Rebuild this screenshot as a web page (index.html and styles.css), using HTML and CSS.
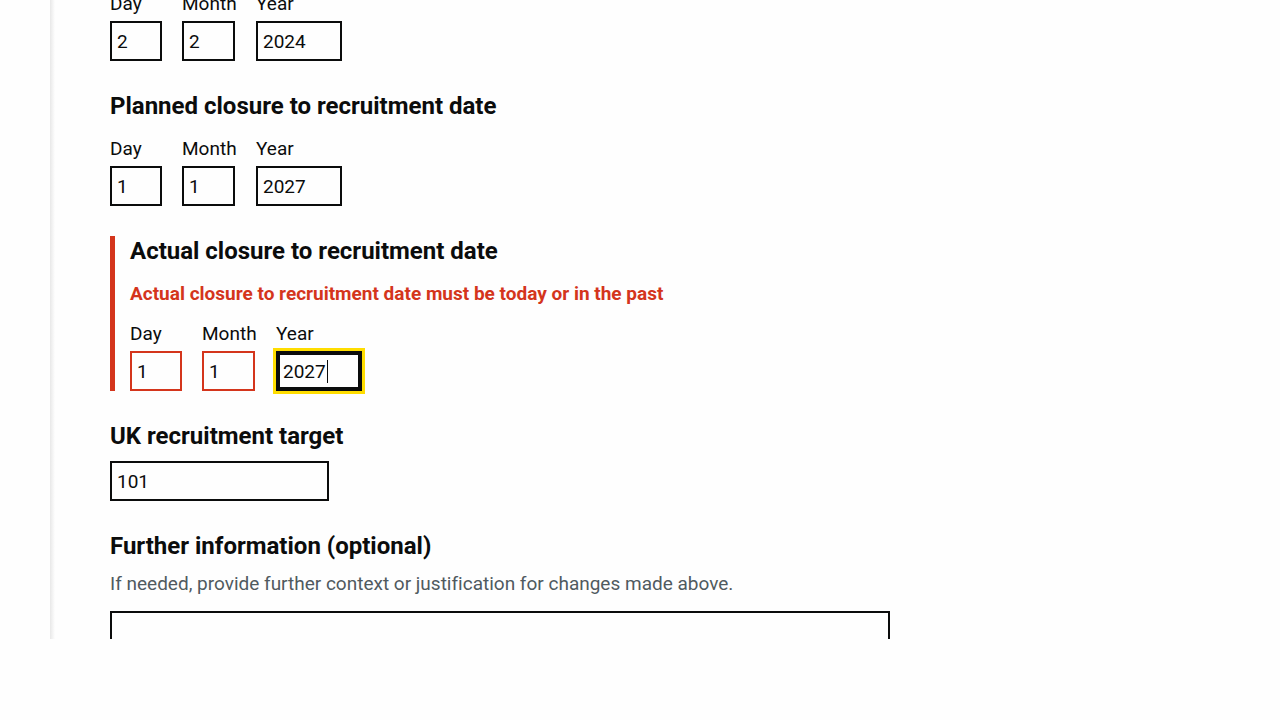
FILE: index.html
```html
<!DOCTYPE html>
<html lang="en">
<head>
<meta charset="utf-8">
<meta name="viewport" content="width=device-width, initial-scale=1">
<title>Recruitment dates</title>
<link rel="stylesheet" href="styles.css">
</head>
<body>
<main class="viewport">
  <form class="panel">
    <fieldset class="group" aria-label="Planned opening date">
      <div class="date">
        <div class="date-item"><label for="open-day">Day</label><input class="input day" id="open-day" type="text" inputmode="numeric" value="2"></div>
        <div class="date-item month-item"><label for="open-month">Month</label><input class="input month" id="open-month" type="text" inputmode="numeric" value="2"></div>
        <div class="date-item"><label for="open-year">Year</label><input class="input year" id="open-year" type="text" inputmode="numeric" value="2024"></div>
      </div>
    </fieldset>

    <fieldset class="group">
      <legend class="heading legend">Planned closure to recruitment date</legend>
      <div class="date">
        <div class="date-item"><label for="planned-day">Day</label><input class="input day" id="planned-day" type="text" inputmode="numeric" value="1"></div>
        <div class="date-item month-item"><label for="planned-month">Month</label><input class="input month" id="planned-month" type="text" inputmode="numeric" value="1"></div>
        <div class="date-item"><label for="planned-year">Year</label><input class="input year" id="planned-year" type="text" inputmode="numeric" value="2027"></div>
      </div>
    </fieldset>

    <div class="group group-error">
      <fieldset class="fieldset" aria-describedby="actual-error">
        <legend class="heading legend">Actual closure to recruitment date</legend>
        <p class="error" id="actual-error">Actual closure to recruitment date must be today or in the past</p>
        <div class="date">
          <div class="date-item"><label for="actual-day">Day</label><input class="input day invalid" id="actual-day" type="text" inputmode="numeric" value="1"></div>
          <div class="date-item month-item"><label for="actual-month">Month</label><input class="input month invalid" id="actual-month" type="text" inputmode="numeric" value="1"></div>
          <div class="date-item caret-item"><label for="actual-year">Year</label><input class="input year invalid" id="actual-year" type="text" inputmode="numeric" value="2027" autofocus></div>
        </div>
      </fieldset>
    </div>

    <div class="group">
      <label class="heading label" for="target">UK recruitment target</label>
      <input class="input target" id="target" type="text" inputmode="numeric" value="101">
    </div>

    <div class="group">
      <label class="heading label" for="info">Further information (optional)</label>
      <p class="hint" id="info-hint">If needed, provide further context or justification for changes made above.</p>
      <textarea class="input textarea" id="info" rows="5" aria-describedby="info-hint"></textarea>
    </div>
  </form>
</main>
</body>
</html>
```
FILE: styles.css
```css
* {
  box-sizing: border-box;
}

body {
  margin: 0;
  height: 100vh;
  padding-bottom: 81px;
  background: #fefefe;
  color: #0b0c0c;
  font-family: Roboto, "Liberation Sans", sans-serif;
  font-size: 19px;
  line-height: 25px;
  text-rendering: optimizeSpeed;
}

.viewport {
  height: 100%;
  overflow: hidden;
  padding-left: 50px;
}

/* The form is scrolled a little past its first labels. */
.panel {
  margin-top: -9px;
  padding-left: 60px;
  background: linear-gradient(to right, #e8e8e8, #fefefe 5px);
}

.group,
.fieldset {
  min-width: 0;
  margin: 0;
  padding: 0;
  border: 0;
}

.group {
  margin-bottom: 30px;
}

.group-error {
  padding-left: 15px;
  border-left: 5px solid #d4351c;
}

.heading {
  display: block;
  padding: 0;
  font-size: 24px;
  font-weight: 700;
  line-height: 30px;
}

.legend {
  margin-bottom: 15px;
}

.label {
  margin-bottom: 10px;
}

.error {
  margin: 0 0 15px;
  color: #d4351c;
  font-weight: 700;
}

.hint {
  margin: 0 0 15px;
  color: #505a5f;
}

.date {
  display: flex;
  gap: 20px;
}

.date-item {
  display: flex;
  flex-direction: column;
  gap: 5px;
}

.month-item {
  width: 54px;
}

.input {
  display: block;
  height: 40px;
  margin: 0;
  padding: 5px;
  border: 2px solid #0b0c0c;
  border-radius: 0;
  background: #fefefe;
  color: #0b0c0c;
  font: inherit;
}

.day {
  width: 52px;
}

.month {
  width: 53px;
}

.year {
  width: 86px;
}

.target {
  width: 219px;
}

.textarea {
  width: 66.6667%;
  height: auto;
  resize: vertical;
}

.invalid {
  border-color: #d4351c;
}

.input:focus {
  border-color: #0b0c0c;
  outline: 3px solid #fd0;
  box-shadow: inset 0 0 0 2px #0b0c0c;
}

/* Text caret after the four digits of the year. */
.caret-item {
  position: relative;
}

.caret-item .input {
  caret-color: transparent;
}

.caret-item:focus-within::after {
  content: "";
  position: absolute;
  left: 51px;
  bottom: 8px;
  width: 1px;
  height: 23px;
  background: #0b0c0c;
}
```
